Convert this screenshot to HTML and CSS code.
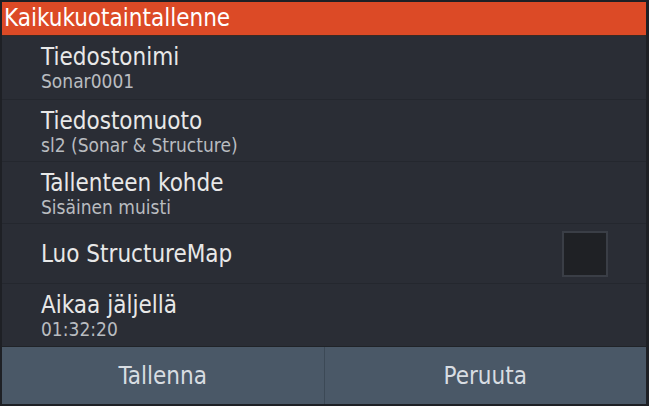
FILE: index.html
```html
<!DOCTYPE html>
<html lang="fi">
<head>
  <meta charset="UTF-8" />
  <title>Kaikukuotaintallenne</title>
  <link rel="stylesheet" href="styles.css">
</head>
<body>
  <div class="dialog">
    <div class="title">Kaikukuotaintallenne</div>

    <div class="list">
      <div class="row">
        <div class="label">Tiedostonimi</div>
        <div class="value">Sonar0001</div>
      </div>
      <div class="row">
        <div class="label">Tiedostomuoto</div>
        <div class="value">sl2 (Sonar &amp; Structure)</div>
      </div>
      <div class="row">
        <div class="label">Tallenteen kohde</div>
        <div class="value">Sisäinen muisti</div>
      </div>
      <div class="row row-check">
        <div class="label">Luo StructureMap</div>
        <div class="checkbox"></div>
      </div>
      <div class="row">
        <div class="label">Aikaa jäljellä</div>
        <div class="value">01:32:20</div>
      </div>
    </div>

    <div class="buttons">
      <button class="btn">Tallenna</button>
      <button class="btn">Peruuta</button>
    </div>
  </div>
</body>
</html>
```

FILE: styles.css
```css
html, body {
  margin: 0;
  padding: 0;
  background: #1c1e22;
}

.dialog {
  width: 649px;
  height: 406px;
  box-sizing: border-box;
  padding: 2px 3px 2px 2px;
  display: flex;
  flex-direction: column;
  background: #1e2025;
  font-family: "DejaVu Sans Condensed", "DejaVu Sans", sans-serif;
}

.title {
  height: 33px;
  line-height: 33px;
  padding-left: 2px;
  background: #dc4a26;
  color: #ffffff;
  font-size: 24px;
  border-bottom: 1px solid #3a2a24;
}

.list {
  flex: 1;
  display: flex;
  flex-direction: column;
  background: #2a2d35;
}

.row {
  height: 62px;
  box-sizing: border-box;
  padding: 8px 0 0 39px;
  border-bottom: 1px solid #24272e;
}

.row:first-child {
  height: 64px;
}

.row-check {
  height: 60px;
  display: flex;
  align-items: center;
  justify-content: space-between;
  padding-top: 0;
  padding-right: 38px;
}

.row:last-child {
  border-bottom: none;
  flex: 1;
}

.label {
  color: #e8e8e8;
  font-size: 24px;
  line-height: 26px;
}

.value {
  color: #b9bcc0;
  font-size: 19px;
  line-height: 22px;
}

.checkbox {
  width: 42px;
  height: 42px;
  background: #1f2125;
  border: 2px solid #3a3e46;
}

.buttons {
  height: 57px;
  display: flex;
  gap: 1px;
  background: #3c4956;
  border-top: 1px solid #202328;
}

.btn {
  flex: 1;
  border: none;
  margin: 0;
  padding: 0;
  background: #4a5867;
  color: #d8dde2;
  font-family: "DejaVu Sans Condensed", "DejaVu Sans", sans-serif;
  font-size: 24px;
}
```
